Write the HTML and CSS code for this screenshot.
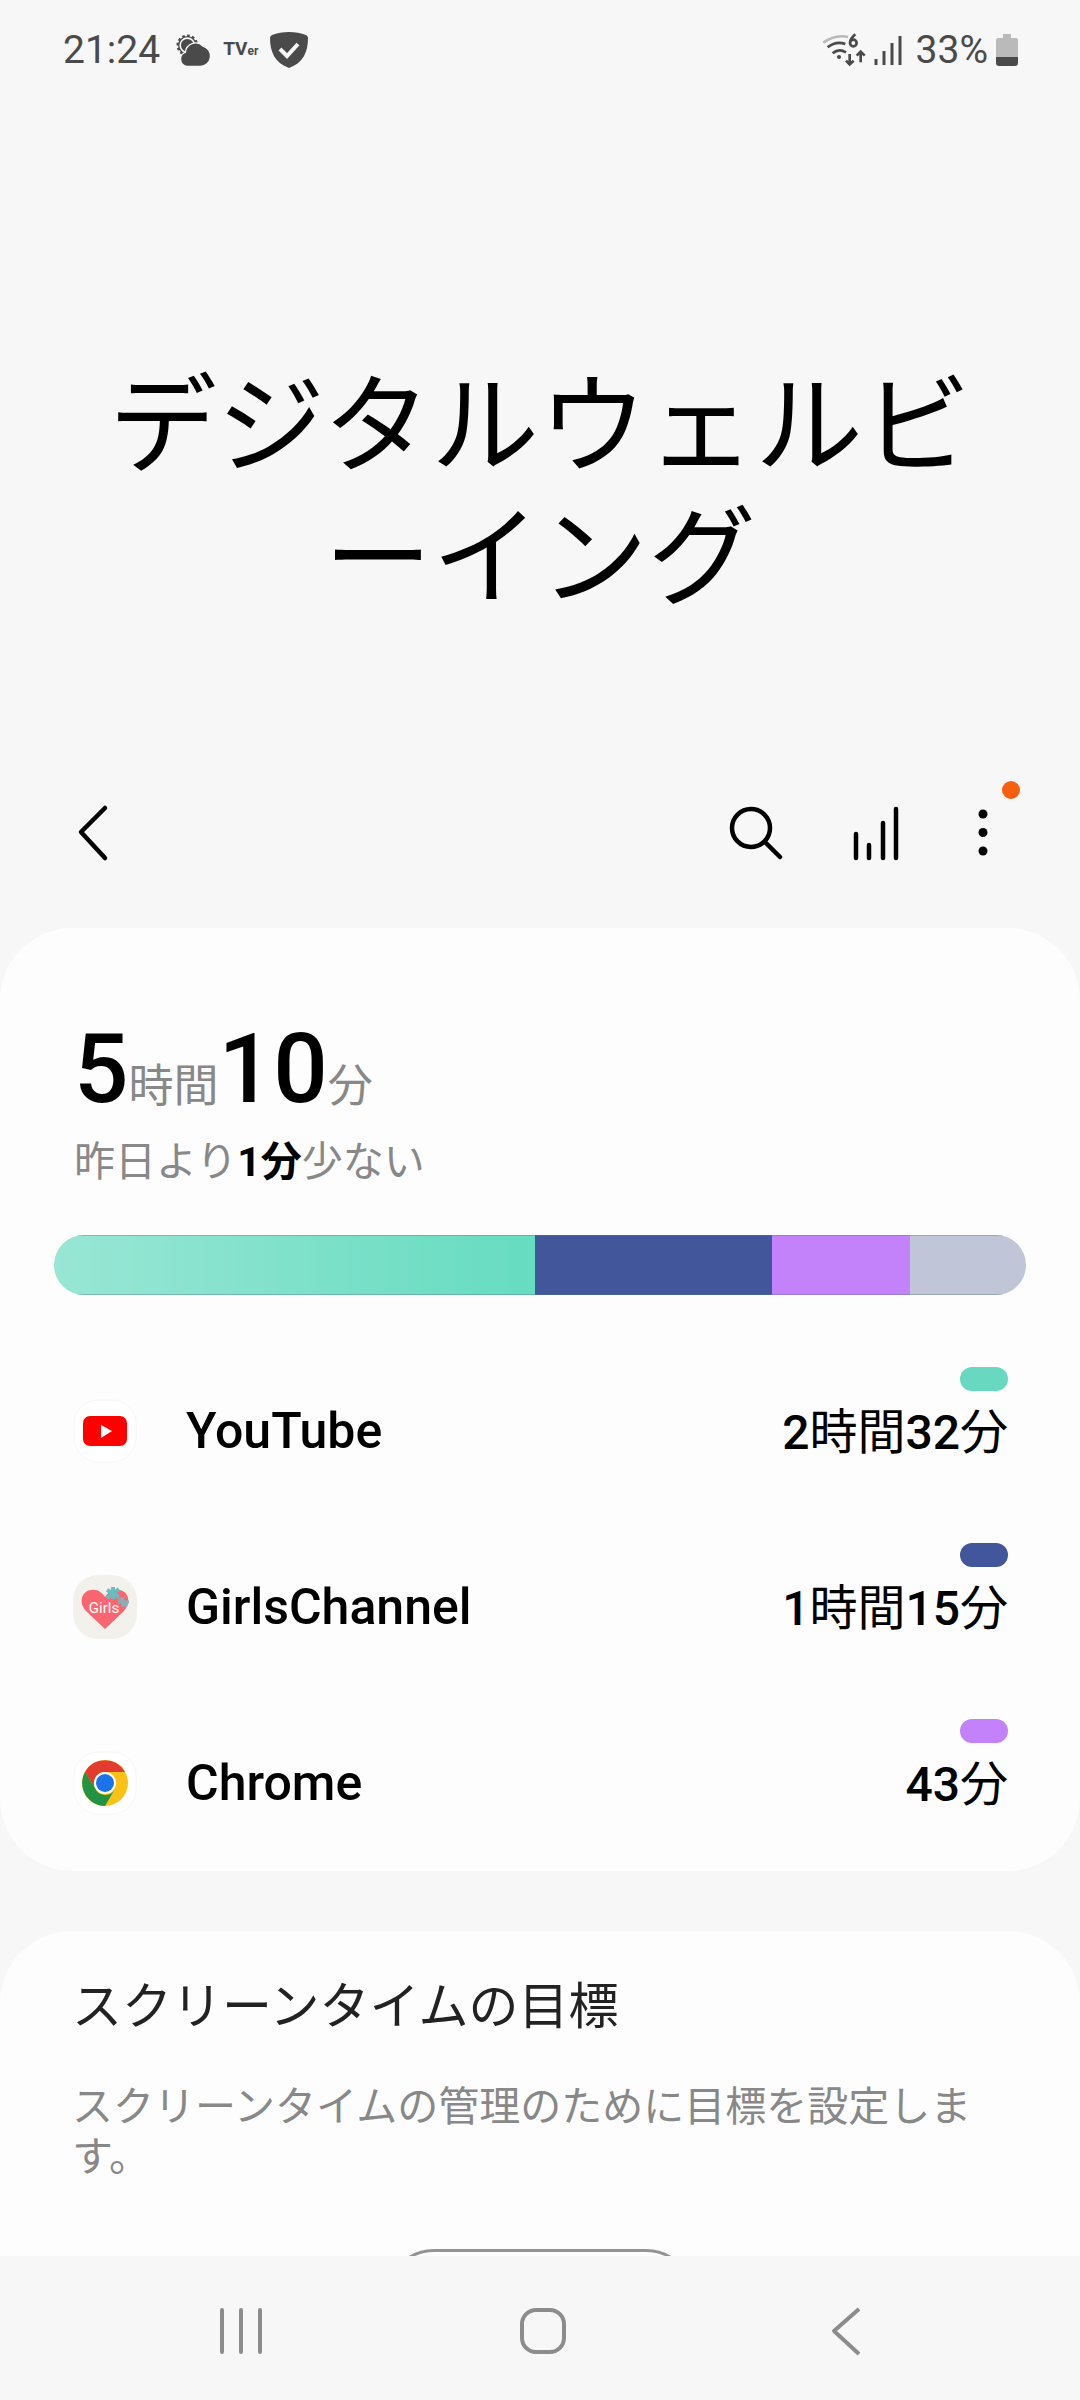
FILE: index.html
```html
<!DOCTYPE html>
<html lang="ja">
<head>
<meta charset="utf-8">
<meta name="viewport" content="width=device-width, initial-scale=1">
<title>デジタルウェルビーイング</title>
<link rel="stylesheet" href="styles.css">
</head>
<body>
<div class="app">
  <div class="status">
    <div class="status-group">
      <span class="status-text">21:24</span>
      <svg class="icon-weather" width="36" height="32" viewBox="0 0 108 96" aria-hidden="true">
        <circle cx="37" cy="34" r="29" fill="none" stroke="#4a4a4a" stroke-width="7" stroke-dasharray="8 7"/>
        <circle cx="37" cy="34" r="26" fill="none" stroke="#4a4a4a" stroke-width="4"/>
        <circle cx="37" cy="34" r="19" fill="#4a4a4a"/>
        <path d="M36 95a20 20 0 0 1-3-39 29 29 0 0 1 50-18 29 29 0 0 1-7 57z" fill="#4a4a4a" stroke="#f7f7f7" stroke-width="8" paint-order="stroke"/>
      </svg>
      <span class="tver"><b class="tver-big">TV</b><b class="tver-small">er</b></span>
      <svg width="38" height="38" viewBox="0 0 38 38" aria-hidden="true">
        <path d="M19 1c6 0 12 1 17 3q2 1 2 3c0 14-5 25-19 30C5 32 0 21 0 7q0-2 2-3c5-2 11-3 17-3z" fill="#4a4a4a"/>
        <path d="M10 18l7 7L28 13" fill="none" stroke="#f7f7f7" stroke-width="4"/>
      </svg>
    </div>
    <div class="status-group status-right">
      <svg width="44" height="34" viewBox="0 0 132 102" aria-hidden="true" fill="none" stroke="#4a4a4a" stroke-width="8">
        <path d="M4 29Q40 3 78 12" stroke="#b8b8b8"/>
        <path d="M17 43Q42 23 70 33"/>
        <path d="M32 61Q50 45 72 58"/>
        <circle cx="51" cy="72" r="6" fill="#4a4a4a" stroke="none"/>
        <path d="M100 4Q86 16 84 28"/>
        <circle cx="94" cy="30" r="10"/>
        <path d="M83 63v30M72 83l11 11 12-11M116 88V57M104 68l12-12 12 12"/>
      </svg>
      <svg class="icon-signal" width="28" height="30" viewBox="0 0 28 30" aria-hidden="true">
        <path d="M2 24v6M10 16v14M18 8v22M26 1v29" stroke="#4a4a4a" stroke-width="3"/>
      </svg>
      <span class="status-text">33%</span>
      <svg class="icon-battery" width="22" height="32" viewBox="0 0 22 32" aria-hidden="true">
        <path d="M7 0h8v4h5q2 0 2 2v17H0V6q0-2 2-2h5z" fill="#bababa"/>
        <path d="M0 23h22v6q0 3-3 3H3q-3 0-3-3z" fill="#4a4a4a"/>
      </svg>
    </div>
  </div>

  <main class="content">
    <h1 class="title">デジタルウェルビーイング</h1>

    <div class="toolbar">
      <button class="tool tool-back" aria-label="戻る">
        <svg width="96" height="96" viewBox="0 0 96 96"><path d="M60 24L36 48l24 26" fill="none" stroke="#000" stroke-width="4.5" stroke-linecap="round" stroke-linejoin="round"/></svg>
      </button>
      <button class="tool" aria-label="検索">
        <svg width="96" height="96" viewBox="0 0 96 96" fill="none" stroke="#000" stroke-width="4.5" stroke-linecap="round"><circle cx="43" cy="44" r="19"/><path d="M57 58l15 15"/></svg>
      </button>
      <button class="tool" aria-label="統計">
        <svg width="96" height="96" viewBox="0 0 96 96" stroke="#000" stroke-width="4.5" stroke-linecap="round"><path d="M28 50v24M41 61v13M55 39v35M68 25v49"/></svg>
      </button>
      <button class="tool tool-more" aria-label="その他">
        <svg width="94" height="96" viewBox="0 0 94 96"><circle cx="47" cy="30" r="4.5"/><circle cx="47" cy="48.5" r="4.5"/><circle cx="47" cy="67" r="4.5"/></svg>
        <span class="badge"></span>
      </button>
    </div>

    <section class="card usage">
      <p class="total"><strong>5</strong>時間<strong>10</strong>分</p>
      <p class="compare">昨日より<b>1分</b>少ない</p>
      <div class="bar">
        <span class="seg seg-youtube" style="flex-grow: 481"></span>
        <span class="seg seg-girls" style="flex-grow: 237"></span>
        <span class="seg seg-chrome" style="flex-grow: 138"></span>
        <span class="seg seg-other" style="flex-grow: 116"></span>
      </div>
      <ul class="apps">
        <li class="app-row">
          <svg class="app-icon" width="64" height="64" viewBox="0 0 64 64" aria-hidden="true">
            <rect x="1" y="1" width="62" height="62" rx="24" fill="#fff" stroke="#f6f6f6"/>
            <rect x="10" y="17" width="44" height="30" rx="7" fill="#f00"/>
            <path d="M28 26v13l11-7z" fill="#fff"/>
          </svg>
          <span class="app-name">YouTube</span>
          <div class="app-side"><span class="pill pill-youtube"></span><span class="app-time"><b>2</b>時間<b>32</b>分</span></div>
        </li>
        <li class="app-row">
          <svg class="app-icon" width="64" height="64" viewBox="0 0 64 64" aria-hidden="true">
            <rect width="64" height="64" rx="25" fill="#f3f1ec"/>
            <path d="M32 54L13 36C5 27 9 16 18 15c7-1 11 3 14 7 3-4 7-8 14-7 9 1 13 12 5 21z" fill="#fa6670"/>
            <g fill="none" stroke="#6bbcc0" stroke-width="4"><path d="M40 12v12M34 15l12 7M46 14l-12 9"/><path d="M50 22v10M45 27h11M46 23l8 8" stroke="#8aaeb8" stroke-width="3"/></g>
            <text class="girls-text" x="31" y="38" text-anchor="middle">Girls</text>
          </svg>
          <span class="app-name">GirlsChannel</span>
          <div class="app-side"><span class="pill pill-girls"></span><span class="app-time"><b>1</b>時間<b>15</b>分</span></div>
        </li>
        <li class="app-row">
          <svg class="app-icon" width="64" height="64" viewBox="0 0 64 64" aria-hidden="true">
            <rect x="1" y="1" width="62" height="62" rx="24" fill="#fff" stroke="#f6f6f6"/>
            <circle cx="32" cy="32" r="23" fill="#fbc116"/>
            <path d="M12 21A23 23 0 0 1 52 21H32a11 11 0 0 0-10 16z" fill="#e33b2e"/>
            <path d="M12 21A23 23 0 0 0 32 55l10-17a11 11 0 0 1-20-1z" fill="#229342"/>
            <circle cx="32" cy="32" r="11" fill="#fff"/>
            <circle cx="32" cy="32" r="9" fill="#1a73e8"/>
          </svg>
          <span class="app-name">Chrome</span>
          <div class="app-side"><span class="pill pill-chrome"></span><span class="app-time"><b>43</b>分</span></div>
        </li>
      </ul>
    </section>

    <section class="card goal">
      <h2 class="goal-title">スクリーンタイムの目標</h2>
      <p class="goal-text">スクリーンタイムの管理のために目標を設定します。</p>
      <button class="goal-button" aria-label="目標を設定"></button>
    </section>
  </main>

  <nav class="nav">
    <button class="nav-button" aria-label="履歴">
      <svg width="50" height="50" viewBox="0 0 50 50" stroke="#8c8c8c" stroke-width="4" stroke-linecap="round"><path d="M6 4v42M25 4v42M44 4v42"/></svg>
    </button>
    <button class="nav-button" aria-label="ホーム">
      <svg width="50" height="50" viewBox="0 0 50 50"><rect x="4" y="4" width="42" height="42" rx="14" fill="none" stroke="#8c8c8c" stroke-width="4"/></svg>
    </button>
    <button class="nav-button" aria-label="戻る">
      <svg width="50" height="50" viewBox="0 0 50 50"><path d="M39 3L14 25l25 23" fill="none" stroke="#8c8c8c" stroke-width="4" stroke-linejoin="round"/></svg>
    </button>
  </nav>
</div>
</body>
</html>
```
FILE: styles.css
```css
* {
  box-sizing: border-box;
  margin: 0;
  padding: 0;
}

body {
  background: #f7f7f7;
  color: #000;
  font-family: Roboto, "Noto Sans CJK JP", sans-serif;
}

button {
  border: 0;
  background: none;
  font: inherit;
}

svg {
  display: block;
}

.app {
  display: flex;
  flex-direction: column;
  height: 100vh;
}

/* Status bar */
.status {
  display: flex;
  flex: none;
  justify-content: space-between;
  align-items: center;
  height: 100px;
  padding: 0 62px 0 63px;
}

.status-group {
  display: flex;
  align-items: center;
  gap: 12px;
  color: #4a4a4a;
}

.status-right {
  gap: 8px;
}

.status-text {
  font-size: 39px;
  line-height: 48px;
}

.icon-weather {
  margin-left: 3px;
}

.icon-signal {
  margin-right: 6px;
}

.tver {
  display: flex;
  align-items: baseline;
  line-height: 32px;
}

.tver-big {
  font-size: 19px;
}

.tver-small {
  font-size: 12px;
}

/* Scrolling content */
.content {
  flex: 1;
  min-height: 0;
  overflow-y: auto;
  scrollbar-width: none;
}

.title {
  padding: 261px 96px 159px;
  font-size: 108px;
  font-weight: 400;
  line-height: 132px;
  text-align: center;
  word-break: break-all;
  line-break: anywhere;
}

.toolbar {
  display: flex;
  height: 96px;
  margin-bottom: 48px;
  padding: 0 50px 0 45px;
}

.tool {
  display: flex;
  justify-content: center;
  position: relative;
  width: 120px;
}

.tool-back {
  width: 96px;
  margin-right: auto;
}

.tool-more {
  width: 94px;
}

.badge {
  position: absolute;
  top: -3px;
  right: 10px;
  width: 18px;
  height: 18px;
  border-radius: 50%;
  background: #f75e0d;
}

.card {
  border-radius: 72px;
  background: #fdfdfd;
}

/* Usage card */
.usage {
  padding: 90px 54px 0;
}

.total {
  padding: 0 20px;
  color: #888;
  font-size: 45px;
  line-height: 102px;
}

.total strong {
  color: #000;
  font-size: 96px;
  font-weight: 500;
}

.compare {
  padding: 0 20px;
  color: #888;
  font-size: 41px;
  line-height: 48px;
}

.compare b {
  color: #000;
  font-weight: 700;
}

.bar {
  display: flex;
  height: 60px;
  margin: 49px 0 48px;
  border-radius: 30px;
  overflow: hidden;
}

.seg {
  flex-basis: 0;
  border: 1px solid rgba(90, 120, 130, 0.4);
  border-width: 1px 0;
}

.seg-youtube {
  background: linear-gradient(90deg, #98e6d4, #66dcc0);
}

.seg-girls,
.pill-girls {
  background: #42579b;
}

.seg-chrome,
.pill-chrome {
  background: #c382fa;
}

.seg-other {
  background: #c0c6d8;
}

.apps {
  list-style: none;
}

.app-row {
  display: flex;
  align-items: center;
  height: 176px;
  padding: 0 18px 0 19px;
}

.app-icon {
  flex: none;
  margin-right: 49px;
}

.girls-text {
  fill: #fff;
  font-size: 15px;
}

.app-name {
  flex: 1;
  font-size: 50px;
  font-weight: 500;
  line-height: 80px;
}

.app-side {
  display: flex;
  flex-direction: column;
  align-items: flex-end;
  height: 128px;
}

.pill {
  width: 48px;
  height: 24px;
  border-radius: 12px;
}

.pill-youtube {
  background: #68d9c0;
}

.app-time {
  font-size: 48px;
  line-height: 84px;
}

.app-time b {
  font-weight: 500;
}

/* Goal card */
.goal {
  margin-top: 60px;
  padding: 44px 72px 48px;
}

.goal-title {
  color: #222;
  font-size: 50px;
  font-weight: 400;
  line-height: 64px;
}

.goal-text {
  margin-top: 43px;
  color: #888;
  font-size: 41px;
  line-height: 50px;
  word-break: break-all;
}

.goal-button {
  display: block;
  width: 308px;
  height: 96px;
  margin: 67px auto 0;
  border: 3px solid #939393;
  border-radius: 48px;
}

/* Navigation bar */
.nav {
  display: grid;
  flex: none;
  grid-template-columns: repeat(3, 1fr);
  height: 144px;
  padding: 6px 84px 0 90px;
}

.nav-button {
  display: flex;
  justify-content: center;
  align-items: center;
}
```
